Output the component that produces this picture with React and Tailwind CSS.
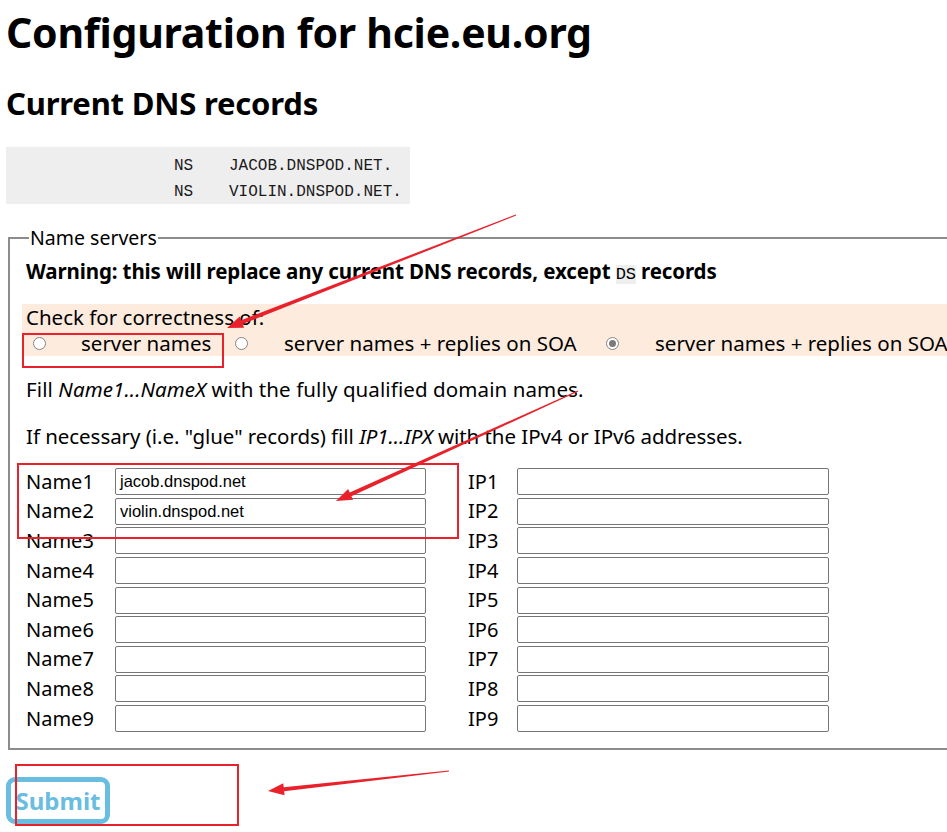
import React from "react";

const RED = "#e8212b";

// tapered arrow: thin tail, thicker near the head
const Arrow = ({ x1, y1, x2, y2 }) => {
  const dx = x2 - x1;
  const dy = y2 - y1;
  const len = Math.sqrt(dx * dx + dy * dy);
  const ux = dx / len;
  const uy = dy / len;
  const nx = -uy;
  const ny = ux;
  const headLen = 16;
  const headW = 6;
  const bx = x2 - ux * headLen;
  const by = y2 - uy * headLen;
  const t0 = 0.6;
  const t1 = 2;
  const pts = [
    [x1 + nx * t0, y1 + ny * t0],
    [bx + nx * t1, by + ny * t1],
    [bx + nx * headW, by + ny * headW],
    [x2, y2],
    [bx - nx * headW, by - ny * headW],
    [bx - nx * t1, by - ny * t1],
    [x1 - nx * t0, y1 - ny * t0],
  ];
  return <polygon points={pts.map((p) => p.join(",")).join(" ")} fill={RED} />;
};

const Radio = ({ checked }) => (
  <span className="inline-flex items-center justify-center w-[13px] h-[13px] rounded-full border border-[#858585] bg-white shrink-0">
    {checked && <span className="w-[7px] h-[7px] rounded-full bg-[#7a7a7a]" />}
  </span>
);

const Field = ({ value }) => (
  <div className="h-[27px] w-full border border-[#767676] rounded-[2px] bg-white px-[4px] flex items-center text-[16.5px] text-black font-['Liberation_Sans',Arial,sans-serif]">
    {value}
  </div>
);

const NAMES = ["jacob.dnspod.net", "violin.dnspod.net", "", "", "", "", "", "", ""];

export default function App() {
  return (
    <div className="relative w-[947px] h-[832px] overflow-hidden bg-white text-black font-['Noto_Sans',sans-serif]">
      <h1 className="ml-[6px] mt-[4px] text-[41px] font-bold leading-[56px] tracking-[-0.25px]">
        Configuration for hcie.eu.org
      </h1>
      <h2 className="ml-[6px] mt-[23px] text-[31px] font-bold leading-[40px] tracking-[-0.2px]">
        Current DNS records
      </h2>

      <pre className="ml-[6px] mt-[24px] w-[404px] h-[57px] bg-[#eeeeee] pt-[6px] text-[16px] leading-[26px] text-[#1a1a1a] font-['Liberation_Mono',monospace]">
        <div className="flex">
          <span className="w-[168px]" />
          <span className="w-[55px]">NS</span>
          <span>JACOB.DNSPOD.NET.</span>
        </div>
        <div className="flex">
          <span className="w-[168px]" />
          <span className="w-[55px]">NS</span>
          <span>VIOLIN.DNSPOD.NET.</span>
        </div>
      </pre>

      <fieldset className="ml-[8px] mt-[22px] w-[980px] h-[524px] border-2 border-[#8c8c8c] pl-[12px] pt-[0px]">
        <legend className="ml-[7px] px-[1px] text-[19.5px] leading-[24px]">Name servers</legend>
        <p className="pl-[4px] mt-[8px] text-[20.5px] leading-[26px] font-bold tracking-[-0.12px]">
          Warning: this will replace any current DNS records, except{" "}
          <code className="bg-[#eeeeee] font-['Liberation_Mono',monospace] text-[17px] font-normal">DS</code>{" "}
          records
        </p>

        <div className="mt-[16px] bg-[#fdebdd] px-[4px] text-[20.5px] leading-[26px]">
          <div>Check for correctness of:</div>
          <div className="flex items-center h-[26px] whitespace-nowrap">
            <span className="flex items-center w-[209px] pl-[7px] shrink-0">
              <Radio />
              <span className="ml-[35px]">server names</span>
            </span>
            <span className="flex items-center w-[371px] shrink-0">
              <Radio />
              <span className="ml-[36px]">server names + replies on SOA</span>
            </span>
            <span className="flex items-center">
              <Radio checked />
              <span className="ml-[36px]">server names + replies on SOA</span>
            </span>
          </div>
        </div>

        <p className="pl-[4px] mt-[20px] text-[20.5px] leading-[26px] tracking-[0.1px]">
          Fill <i>Name1...NameX</i> with the fully qualified domain names.
        </p>
        <p className="pl-[4px] mt-[21px] text-[20.5px] leading-[26px] tracking-[-0.05px]">
          If necessary (i.e. "glue" records) fill <i>IP1...IPX</i> with the IPv4 or IPv6 addresses.
        </p>

        <div className="mt-[18px] pl-[4px] w-[811px] grid grid-cols-[89px_311px_42px_49px_312px] auto-rows-[29.6px] text-[20px]">
          {NAMES.map((v, i) => (
            <React.Fragment key={i}>
              <div className="flex items-center">Name{i + 1}</div>
              <div className="flex items-center"><Field value={v} /></div>
              <div />
              <div className="flex items-center">IP{i + 1}</div>
              <div className="flex items-center"><Field value="" /></div>
            </React.Fragment>
          ))}
        </div>
      </fieldset>

      <div className="ml-[6px] mt-[27px]">
        <button className="w-[104px] h-[47px] rounded-[9px] border-[5px] border-[#68bde1] bg-white text-[#68bde1] text-[24px] font-bold leading-none">
          Submit
        </button>
      </div>

      {/* annotations */}
      <svg className="absolute left-0 top-0 pointer-events-none" width="947" height="832">
        <rect x="23" y="334" width="200" height="33" fill="none" stroke={RED} strokeWidth="2" />
        <rect x="18" y="464" width="440" height="74" fill="none" stroke={RED} strokeWidth="2" />
        <rect x="16" y="765" width="222" height="60" fill="none" stroke={RED} strokeWidth="2" />
        <Arrow x1={516} y1={215} x2={227} y2={328} />
        <Arrow x1={578} y1={391} x2={336} y2={501} />
        <Arrow x1={449} y1={771} x2={268} y2={791} />
      </svg>
    </div>
  );
}
